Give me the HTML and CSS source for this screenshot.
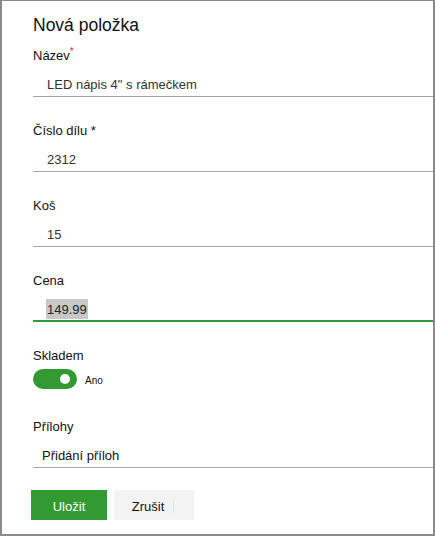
FILE: index.html
```html
<!DOCTYPE html>
<html lang="cs">
<head>
<meta charset="utf-8">
<title>Nová položka</title>
<link rel="stylesheet" href="styles.css">
</head>
<body>
<div class="panel">
  <h1 class="title">Nová položka</h1>

  <div class="field first">
    <div class="label">Název<span class="req">*</span></div>
    <div class="input">LED nápis 4" s rámečkem</div>
  </div>

  <div class="field">
    <div class="label">Číslo dílu *</div>
    <div class="input">2312</div>
  </div>

  <div class="field">
    <div class="label">Koš</div>
    <div class="input">15</div>
  </div>

  <div class="field">
    <div class="label">Cena</div>
    <div class="input active"><span class="sel">149.99</span></div>
  </div>

  <div class="field">
    <div class="label">Skladem</div>
    <div class="toggle-row">
      <span class="toggle"><span class="knob"></span></span>
      <span class="toggle-text">Ano</span>
    </div>
  </div>

  <div class="field attach">
    <div class="label">Přílohy</div>
    <div class="input attach-input">Přidání příloh</div>
  </div>

  <div class="actions">
    <button class="btn primary">Uložit</button>
    <button class="btn secondary">Zrušit<span class="caret"></span></button>
  </div>
</div>
</body>
</html>
```
FILE: styles.css
```css
html, body {
  margin: 0;
  padding: 0;
  background: #ffffff;
}
body {
  font-family: "Liberation Sans", Arial, sans-serif;
  color: #111111;
}
.panel {
  box-sizing: border-box;
  width: 435px;
  height: 536px;
  border-top: 1px solid #8a8a8a;
  border-left: 2px solid #8a8a8a;
  border-right: 2px solid #8a8a8a;
  border-bottom: 2px solid #8a8a8a;
  padding-left: 31px;
  padding-top: 13px;
}
.title {
  margin: 0;
  font-size: 17.5px;
  font-weight: normal;
  line-height: 22px;
  color: #111111;
}
.field {
  margin-top: 25px;
}
.field.first {
  margin-top: 11px;
}
.label {
  font-size: 13px;
  line-height: 18px;
  color: #111111;
}
.req {
  color: #c4314b;
  font-size: 10px;
  vertical-align: top;
  line-height: 10px;
  margin-left: 0;
}
.input {
  font-size: 13px;
  line-height: 18px;
  color: #333333;
  padding: 11px 0 2px 14px;
  border-bottom: 1px solid #a6a6a6;
}
.input.active {
  border-bottom: 2px solid #2f9b35;
  padding-bottom: 1px;
}
.sel {
  background: #c8c8c8;
  color: #222222;
  padding: 3px 1px 2px 1px;
  margin-left: -1px;
}
.toggle-row {
  display: flex;
  align-items: center;
  margin-top: 4px;
  height: 20px;
}
.toggle {
  position: relative;
  display: inline-block;
  width: 44px;
  height: 20px;
  border-radius: 10px;
  background: #339933;
}
.knob {
  position: absolute;
  right: 7px;
  top: 5px;
  width: 10px;
  height: 10px;
  border-radius: 50%;
  background: #ffffff;
}
.toggle-text {
  font-size: 10px;
  margin-left: 8px;
  color: #111111;
  padding-top: 2px;
}
.field.attach {
  margin-top: 29px;
}
.attach-input {
  padding-left: 9px;
  color: #111111;
}
.actions {
  display: flex;
  gap: 7px;
  margin-top: 22px;
  margin-left: -2px;
}
.btn {
  font-family: "Liberation Sans", Arial, sans-serif;
  font-size: 13px;
  height: 30px;
  border: none;
  padding: 3px 0 0 0;
  cursor: pointer;
}
.primary {
  width: 76px;
  background: #339933;
  color: #ffffff;
}
.secondary {
  position: relative;
  width: 80px;
  background: #f3f3f3;
  color: #111111;
  padding-right: 12px;
}
.caret {
  position: absolute;
  left: 59px;
  top: 11px;
  width: 1px;
  height: 12px;
  background: #cde8f5;
}
```
